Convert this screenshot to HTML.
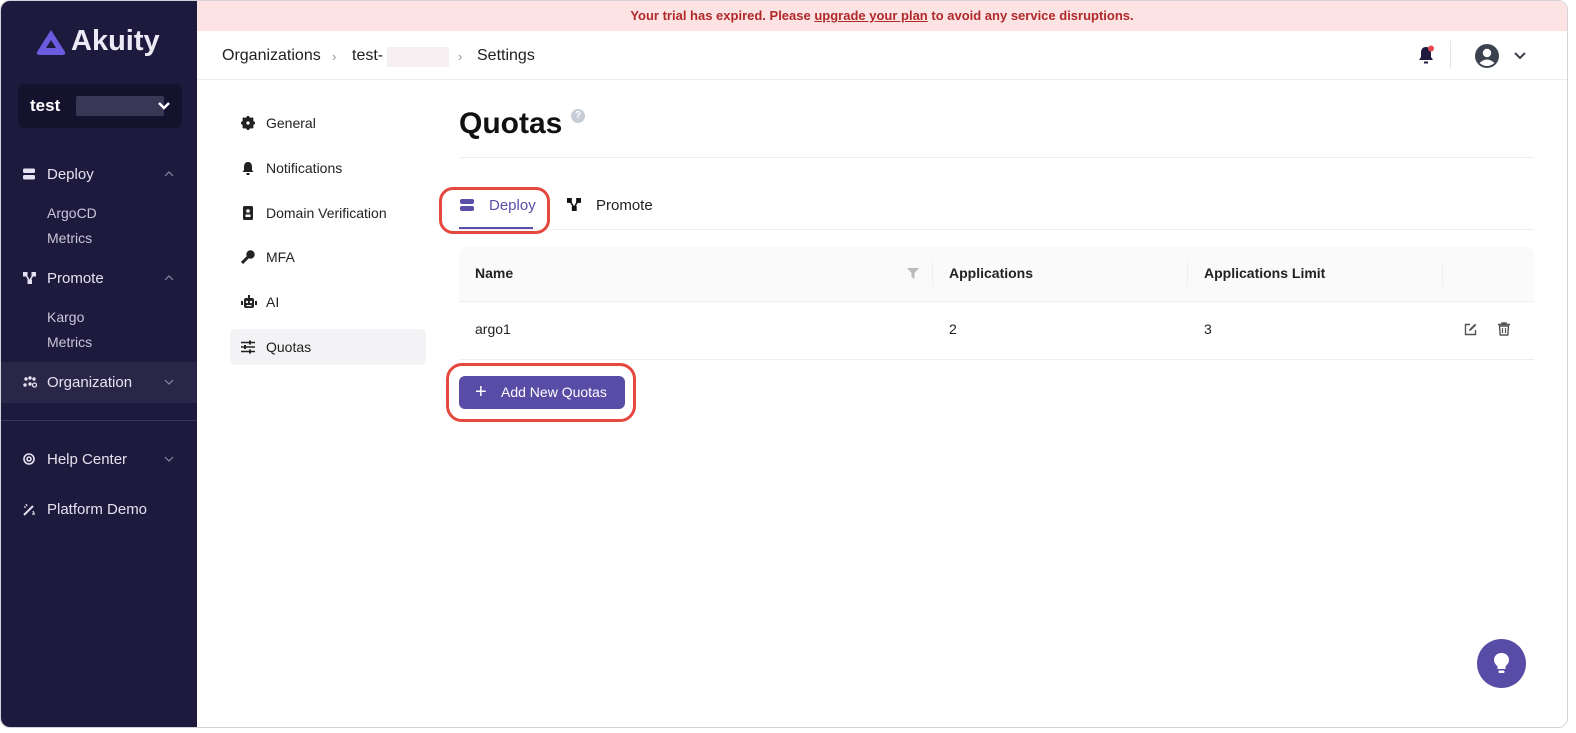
<!DOCTYPE html>
<html><head><meta charset="utf-8"><style>
*{box-sizing:border-box;margin:0;padding:0}
body{width:1576px;height:733px;background:#fff;font-family:"Liberation Sans",sans-serif;position:relative;overflow:hidden}
.frame{position:absolute;left:0;top:0;width:1568px;height:728px;border:1px solid #d4d4d8;border-radius:10px;overflow:hidden;background:#fff}
.side{position:absolute;left:0;top:0;width:196px;height:728px;background:#1e1a3e;color:#e8e6f2}
.logo{position:absolute;left:34px;top:24px;font-size:29px;font-weight:bold;color:#ecebf5;display:flex;align-items:center;gap:4px}
.sel{position:absolute;left:17px;top:83px;width:164px;height:44px;background:#15122e;border-radius:6px}
.sel .t{position:absolute;left:12px;top:12px;font-size:17px;font-weight:bold;color:#fff}
.sel .b{position:absolute;left:58px;top:12px;width:88px;height:20px;background:#3a3656;border-radius:2px}
.nav{position:absolute;left:0;font-size:15px;color:#e4e2f0;width:196px;height:20px}
.nav svg{position:absolute;left:22px;top:3px}
.nav .l{position:absolute;left:46px;top:1px}
.nav .c{position:absolute;left:163px;top:6px}
.sub{position:absolute;left:46px;font-size:14px;color:#c9c6da}
.banner{position:absolute;left:196px;top:0;right:0;height:30px;background:#fde3e4;color:#b02a2a;font-size:13px;font-weight:bold;text-align:center;line-height:30px}
.top{position:absolute;left:196px;top:30px;right:0;height:49px;border-bottom:1px solid #ececec;font-size:16px;color:#1f1f1f}
.crumb{position:absolute;top:16px}
.menu{position:absolute;left:229px;font-size:14px;color:#222;height:36px;width:196px;line-height:36px}
.menu svg{position:absolute;left:11px;top:11px}
.menu .l{position:absolute;left:36px}
</style></head><body>
<div class="frame">
<div class="side">
  <div class="logo"><svg width="32" height="28" viewBox="0 0 32 28"><path d="M16 2 L30 24 Q31 27 27 27 L5 27 Q1 27 2 24 Z" fill="#6a5ce0"/><path d="M16 12 L21 20 L11 20 Z" fill="#1e1a3e"/></svg>Akuity</div>
  <div class="sel"><span class="t">test</span><span class="b"></span><svg style="position:absolute;left:139px;top:17px" width="14" height="10" viewBox="0 0 14 10"><path d="M2 2 L7 7 L12 2" stroke="#fff" stroke-width="2.4" fill="none"/></svg></div>
  <div class="nav" style="top:164px"><svg width="12" height="12" viewBox="0 0 12 12"><rect y="0.5" width="12" height="4.5" rx="1.5" fill="#e4e2f0"/><rect y="7" width="12" height="4.5" rx="1.5" fill="#e4e2f0"/></svg><span class="l">Deploy</span><svg class="c" width="10" height="6" viewBox="0 0 10 6"><path d="M1 5 L5 1 L9 5" stroke="#8a87a3" stroke-width="1.2" fill="none"/></svg></div>
  <div class="sub" style="top:204px">ArgoCD</div>
  <div class="sub" style="top:229px">Metrics</div>
  <div class="nav" style="top:268px"><svg width="13" height="12" viewBox="0 0 13 12"><rect x="0" y="0" width="4.5" height="4.5" fill="#e4e2f0"/><rect x="8.5" y="0" width="4.5" height="4.5" fill="#e4e2f0"/><rect x="4.5" y="7.5" width="4.5" height="4.5" fill="#e4e2f0"/><path d="M3 3 L6.5 9 L10 3" stroke="#e4e2f0" stroke-width="1.5" fill="none"/></svg><span class="l">Promote</span><svg class="c" width="10" height="6" viewBox="0 0 10 6"><path d="M1 5 L5 1 L9 5" stroke="#8a87a3" stroke-width="1.2" fill="none"/></svg></div>
  <div class="sub" style="top:308px">Kargo</div>
  <div class="sub" style="top:333px">Metrics</div>
  <div style="position:absolute;left:0;top:361px;width:196px;height:41px;background:#2a2648"></div>
  <div class="nav" style="top:372px"><svg width="14" height="12" viewBox="0 0 14 12"><circle cx="3" cy="3" r="1.7" fill="#e4e2f0"/><circle cx="7" cy="2" r="1.7" fill="#e4e2f0"/><circle cx="11" cy="3" r="1.7" fill="#e4e2f0"/><circle cx="2" cy="9" r="1.7" fill="#e4e2f0"/><circle cx="7" cy="8" r="1.7" fill="#e4e2f0"/><circle cx="11.5" cy="9" r="2" fill="none" stroke="#e4e2f0" stroke-width="1.3"/></svg><span class="l">Organization</span><svg class="c" width="10" height="6" viewBox="0 0 10 6"><path d="M1 1 L5 5 L9 1" stroke="#8a87a3" stroke-width="1.2" fill="none"/></svg></div>
  <div style="position:absolute;left:0;top:419px;width:196px;height:1px;background:#3a3656"></div>
  <div class="nav" style="top:449px"><svg width="12" height="12" viewBox="0 0 12 12"><circle cx="6" cy="6" r="5" fill="none" stroke="#e4e2f0" stroke-width="1.6"/><circle cx="6" cy="6" r="2" fill="none" stroke="#e4e2f0" stroke-width="1.6"/></svg><span class="l">Help Center</span><svg class="c" width="10" height="6" viewBox="0 0 10 6"><path d="M1 1 L5 5 L9 1" stroke="#8a87a3" stroke-width="1.2" fill="none"/></svg></div>
  <div class="nav" style="top:499px"><svg width="13" height="13" viewBox="0 0 13 13"><path d="M1 12 L10 3" stroke="#e4e2f0" stroke-width="2"/><path d="M3 1 L4 3 M1 4 L3 4 M10 8 L11 10 M9 11 L12 11" stroke="#e4e2f0" stroke-width="1.3"/></svg><span class="l">Platform Demo</span></div>
</div>
<div class="banner">Your trial has expired. Please <u>upgrade your plan</u> to avoid any service disruptions.</div>
<div class="top">
  <span class="crumb" style="left:25px">Organizations</span>
  <span class="crumb" style="left:135px;color:#999;font-size:13px;top:18px">›</span>
  <span class="crumb" style="left:155px">test-</span><span style="position:absolute;left:190px;top:16px;width:62px;height:20px;background:#f6f0f2"></span>
  <span class="crumb" style="left:261px;color:#999;font-size:13px;top:18px">›</span>
  <span class="crumb" style="left:280px">Settings</span>
  <svg style="position:absolute;left:1220px;top:14px" width="18" height="20" viewBox="0 0 18 20"><path d="M9 2 C5 2 4 5 4 8 L4 12 L2 15 L16 15 L14 12 L14 8 C14 5 13 2 9 2Z" fill="#1e1a3e"/><rect x="7" y="16.5" width="4" height="2" fill="#1e1a3e"/><circle cx="14" cy="3.5" r="3" fill="#e5484d"/></svg>
  <div style="position:absolute;left:1253px;top:10px;width:1px;height:28px;background:#e6e6e6"></div>
  <svg style="position:absolute;left:1277px;top:12px" width="26" height="26" viewBox="0 0 26 26"><circle cx="13" cy="13" r="12" fill="#3c4250"/><circle cx="13" cy="10" r="4.2" fill="#fff"/><path d="M5.5 20 Q13 13 20.5 20 Q13 26 5.5 20Z" fill="#fff"/></svg>
  <svg style="position:absolute;left:1316px;top:20px" width="14" height="10" viewBox="0 0 14 10"><path d="M2 2 L7 7 L12 2" stroke="#3c4250" stroke-width="2" fill="none"/></svg>
</div>
<div class="menu" style="top:104px"><svg width="14" height="14" viewBox="0 0 14 14"><circle cx="7" cy="7" r="4.5" fill="none" stroke="#222" stroke-width="3"/><path d="M7 0 V14 M0 7 H14 M2 2 L12 12 M12 2 L2 12" stroke="#222" stroke-width="2.4"/><circle cx="7" cy="7" r="1.6" fill="#fff"/></svg><span class="l">General</span></div>
<div class="menu" style="top:149px"><svg width="14" height="14" viewBox="0 0 14 14"><path d="M7 1 C4 1 3 3.5 3 6 L3 9 L1.5 11 L12.5 11 L11 9 L11 6 C11 3.5 10 1 7 1Z" fill="#222"/><rect x="5.5" y="12" width="3" height="2" fill="#222"/></svg><span class="l">Notifications</span></div>
<div class="menu" style="top:194px"><svg width="14" height="14" viewBox="0 0 14 14"><rect x="2" y="0" width="10" height="14" rx="1.5" fill="#222"/><circle cx="7" cy="5" r="1.8" fill="#fff"/><rect x="4.5" y="8.5" width="5" height="2.5" fill="#fff"/></svg><span class="l">Domain Verification</span></div>
<div class="menu" style="top:238px"><svg width="14" height="14" viewBox="0 0 14 14"><circle cx="9.5" cy="4.5" r="4.2" fill="#222"/><path d="M7 7 L1 13" stroke="#222" stroke-width="3"/></svg><span class="l">MFA</span></div>
<div class="menu" style="top:283px"><svg width="16" height="14" viewBox="0 0 16 14"><rect x="3" y="3" width="10" height="10" rx="2" fill="#222"/><rect x="7" y="0" width="2" height="3" fill="#222"/><rect x="0" y="6" width="2" height="4" fill="#222"/><rect x="14" y="6" width="2" height="4" fill="#222"/><circle cx="6" cy="7" r="1.2" fill="#fff"/><circle cx="10" cy="7" r="1.2" fill="#fff"/><rect x="5.5" y="10" width="5" height="1.2" fill="#fff"/></svg><span class="l">AI</span></div>
<div class="menu" style="top:328px;background:#f3f3f5;border-radius:6px"><svg width="14" height="14" viewBox="0 0 14 14"><path d="M0 2.5 H14 M0 7 H14 M0 11.5 H14" stroke="#222" stroke-width="1.5"/><rect x="8" y="0.5" width="2" height="4" fill="#222"/><rect x="3" y="5" width="2" height="4" fill="#222"/><rect x="8" y="9.5" width="2" height="4" fill="#222"/></svg><span class="l">Quotas</span></div>
<div style="position:absolute;left:458px;top:106px;font-size:30px;font-weight:bold;color:#111">Quotas</div>
<div style="position:absolute;left:570px;top:108px;width:14px;height:14px;border-radius:50%;background:#c6cdd8;color:#fff;font-size:10px;text-align:center;line-height:14px;font-weight:bold">?</div>
<div style="position:absolute;left:458px;top:156px;width:1075px;height:1px;background:#efefef"></div>
<svg style="position:absolute;left:459px;top:197px" width="14" height="14" viewBox="0 0 14 14"><rect x="0" y="1" width="14" height="5" rx="2" fill="#5a4fa8"/><rect x="0" y="8" width="14" height="5" rx="2" fill="#5a4fa8"/></svg>
<div style="position:absolute;left:488px;top:196px;font-size:15px;color:#5a4fa8">Deploy</div>
<div style="position:absolute;left:458px;top:226px;width:74px;height:3px;background:#5a4fa8"></div>
<svg style="position:absolute;left:566px;top:197px" width="14" height="13" viewBox="0 0 13 12"><rect x="0" y="0" width="4.5" height="4.5" fill="#111"/><rect x="8.5" y="0" width="4.5" height="4.5" fill="#111"/><rect x="4.5" y="7.5" width="4.5" height="4.5" fill="#111"/><path d="M3 3 L6.5 9 L10 3" stroke="#111" stroke-width="1.5" fill="none"/></svg>
<div style="position:absolute;left:595px;top:196px;font-size:15px;color:#222">Promote</div>
<div style="position:absolute;left:458px;top:228px;width:1075px;height:1px;background:#efefef"></div>
<div style="position:absolute;left:438px;top:186px;width:111px;height:47px;border:3px solid #e5483f;border-radius:14px"></div>
<div style="position:absolute;left:458px;top:246px;width:1075px;height:55px;background:#fafafa;border-radius:8px 8px 0 0;border-bottom:1px solid #eee"></div>
<div style="position:absolute;left:474px;top:264px;font-size:14px;font-weight:bold;color:#222">Name</div>
<svg style="position:absolute;left:906px;top:267px" width="12" height="11" viewBox="0 0 12 11"><path d="M0 0 H12 L7.5 5 V11 L4.5 9 V5 Z" fill="#bbb"/></svg>
<div style="position:absolute;left:931px;top:261px;width:1px;height:24px;background:#eee"></div>
<div style="position:absolute;left:948px;top:264px;font-size:14px;font-weight:bold;color:#222">Applications</div>
<div style="position:absolute;left:1186px;top:261px;width:1px;height:24px;background:#eee"></div>
<div style="position:absolute;left:1203px;top:264px;font-size:14px;font-weight:bold;color:#222">Applications Limit</div>
<div style="position:absolute;left:1441px;top:261px;width:1px;height:24px;background:#eee"></div>
<div style="position:absolute;left:474px;top:320px;font-size:14px;color:#222">argo1</div>
<div style="position:absolute;left:948px;top:320px;font-size:14px;color:#222">2</div>
<div style="position:absolute;left:1203px;top:320px;font-size:14px;color:#222">3</div>
<svg style="position:absolute;left:1463px;top:322px" width="13" height="13" viewBox="0 0 13 13"><path d="M6 1.5 H1.5 V11.5 H11.5 V7" stroke="#555" stroke-width="1.4" fill="none"/><path d="M5 8 L5.5 6 L11 0.8 L12.3 2.1 L7 7.5 Z" fill="#555"/></svg>
<svg style="position:absolute;left:1497px;top:321px" width="12" height="14" viewBox="0 0 12 14"><path d="M0 2.5 H12 M4 2.5 V1 H8 V2.5" stroke="#555" stroke-width="1.4" fill="none"/><path d="M1.5 4 H10.5 L9.8 13 H2.2 Z" stroke="#555" stroke-width="1.4" fill="none"/><path d="M4.5 6 V11 M7.5 6 V11" stroke="#555" stroke-width="1.2"/></svg>
<div style="position:absolute;left:458px;top:358px;width:1075px;height:1px;background:#eee"></div>
<div style="position:absolute;left:458px;top:375px;width:166px;height:33px;background:#584ca6;border-radius:6px;color:#fff;font-size:14px;line-height:33px"><span style="position:absolute;left:16px;font-size:20px">+</span><span style="position:absolute;left:42px">Add New Quotas</span></div>
<div style="position:absolute;left:445px;top:362px;width:190px;height:59px;border:3px solid #e5483f;border-radius:16px"></div>
<div style="position:absolute;left:1476px;top:638px;width:49px;height:49px;border-radius:50%;background:#584ca6"><svg style="position:absolute;left:15px;top:13px" width="19" height="23" viewBox="0 0 19 23"><path d="M9.5 1 C4.5 1 2 4.5 2 8 C2 11 4 12.5 5.5 14.5 L5.5 17 L13.5 17 L13.5 14.5 C15 12.5 17 11 17 8 C17 4.5 14.5 1 9.5 1Z" fill="#fff"/><rect x="6.5" y="18.5" width="6" height="2.5" rx="1" fill="#fff"/></svg></div>
</div>
</body></html>
